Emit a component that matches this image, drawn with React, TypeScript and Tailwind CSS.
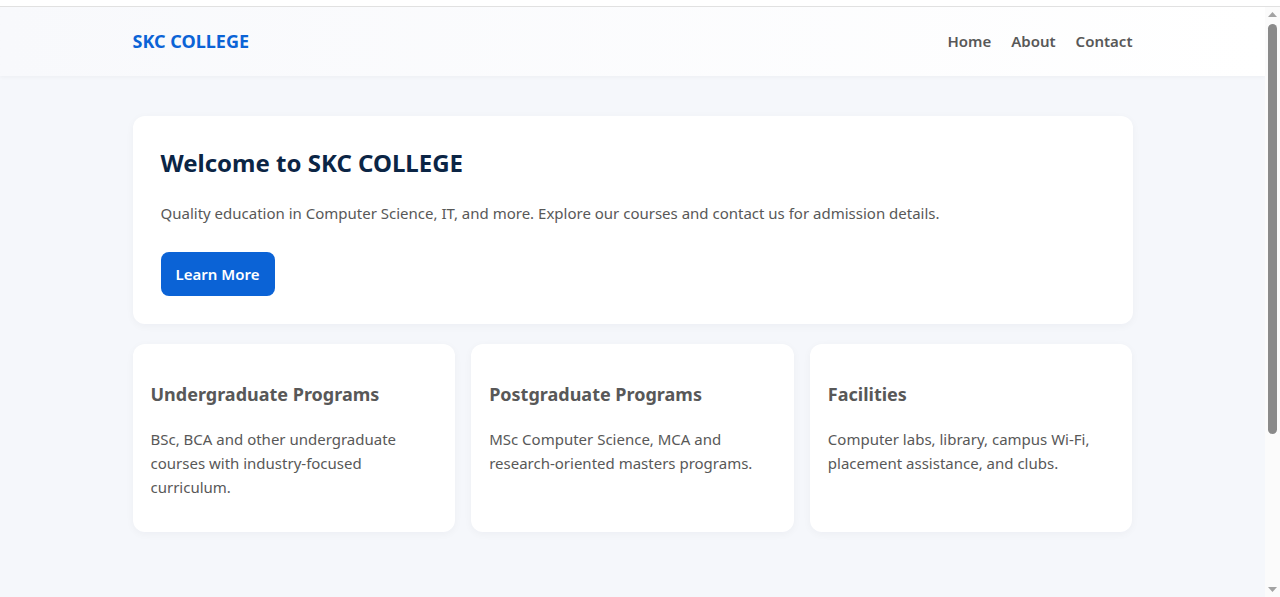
const courses = [
  {
    title: "Undergraduate Programs",
    text: "BSc, BCA and other undergraduate courses with industry-focused curriculum.",
  },
  {
    title: "Postgraduate Programs",
    text: "MSc Computer Science, MCA and research-oriented masters programs.",
  },
  {
    title: "Facilities",
    text: "Computer labs, library, campus Wi-Fi, placement assistance, and clubs.",
  },
];

function Scrollbar() {
  return (
    <div className="flex w-[15px] flex-col items-center bg-[#fbfbfb] py-[5px]">
      <svg width="9" height="5" viewBox="0 0 9 5" className="fill-[#a3a3a3]">
        <polygon points="4.5,0 9,5 0,5" />
      </svg>
      <div className="mt-[7px] h-[410px] w-[9px] rounded-full bg-[#8a8a8a]" />
      <div className="flex-1" />
      <svg width="9" height="5" viewBox="0 0 9 5" className="fill-[#a3a3a3]">
        <polygon points="0,0 9,0 4.5,5" />
      </svg>
    </div>
  );
}

export default function App() {
  return (
    <div className="flex h-screen flex-col overflow-hidden font-['Segoe_UI','Noto_Sans',sans-serif] text-[#585858]">
      <div className="h-[7px] shrink-0 border-b border-[#e1e1e1] bg-white" />
      <div className="flex min-h-0 flex-1">
        <div className="flex-1 overflow-hidden bg-[#f5f7fb]">
          <header className="bg-gradient-to-r from-[#f8f9fc] to-white shadow-[0_1px_4px_rgba(0,0,0,0.04)]">
            <div className="mx-auto flex h-[69px] w-[1000px] items-center justify-between">
              <a className="text-[18px] font-bold text-[#0b63d6]">SKC COLLEGE</a>
              <nav className="flex gap-[20px] text-[15px] font-semibold text-[#585858]">
                <a>Home</a>
                <a>About</a>
                <a>Contact</a>
              </nav>
            </div>
          </header>

          <main className="mx-auto w-[1000px] pt-[40px]">
            <section className="rounded-xl bg-white px-[28px] pt-[29px] pb-[28px] shadow-[0_2px_8px_rgba(15,23,42,0.04)]">
              <h2 className="text-[24px] leading-[36px] font-bold text-[#0b2545]">Welcome to SKC COLLEGE</h2>
              <p className="mt-[20px] text-[15px] leading-[24px] text-[#585858]">
                Quality education in Computer Science, IT, and more. Explore our courses and contact us for admission details.
              </p>
              <button className="mt-[27px] h-[44px] w-[114px] rounded-lg bg-[#0b63d6] text-[15px] font-semibold text-white">
                Learn More
              </button>
            </section>

            <div className="mt-[20px] grid grid-cols-3 gap-[16px]">
              {courses.map((c) => (
                <div key={c.title} className="rounded-xl bg-white px-[18px] pt-[37px] pb-[33px] shadow-[0_2px_8px_rgba(15,23,42,0.04)]">
                  <h3 className="text-[18px] leading-[27px] font-bold text-[#585858]">{c.title}</h3>
                  <p className="mt-[19px] text-[15px] leading-[24px] text-[#585858]">{c.text}</p>
                </div>
              ))}
            </div>
          </main>
        </div>
        <Scrollbar />
      </div>
    </div>
  );
}
